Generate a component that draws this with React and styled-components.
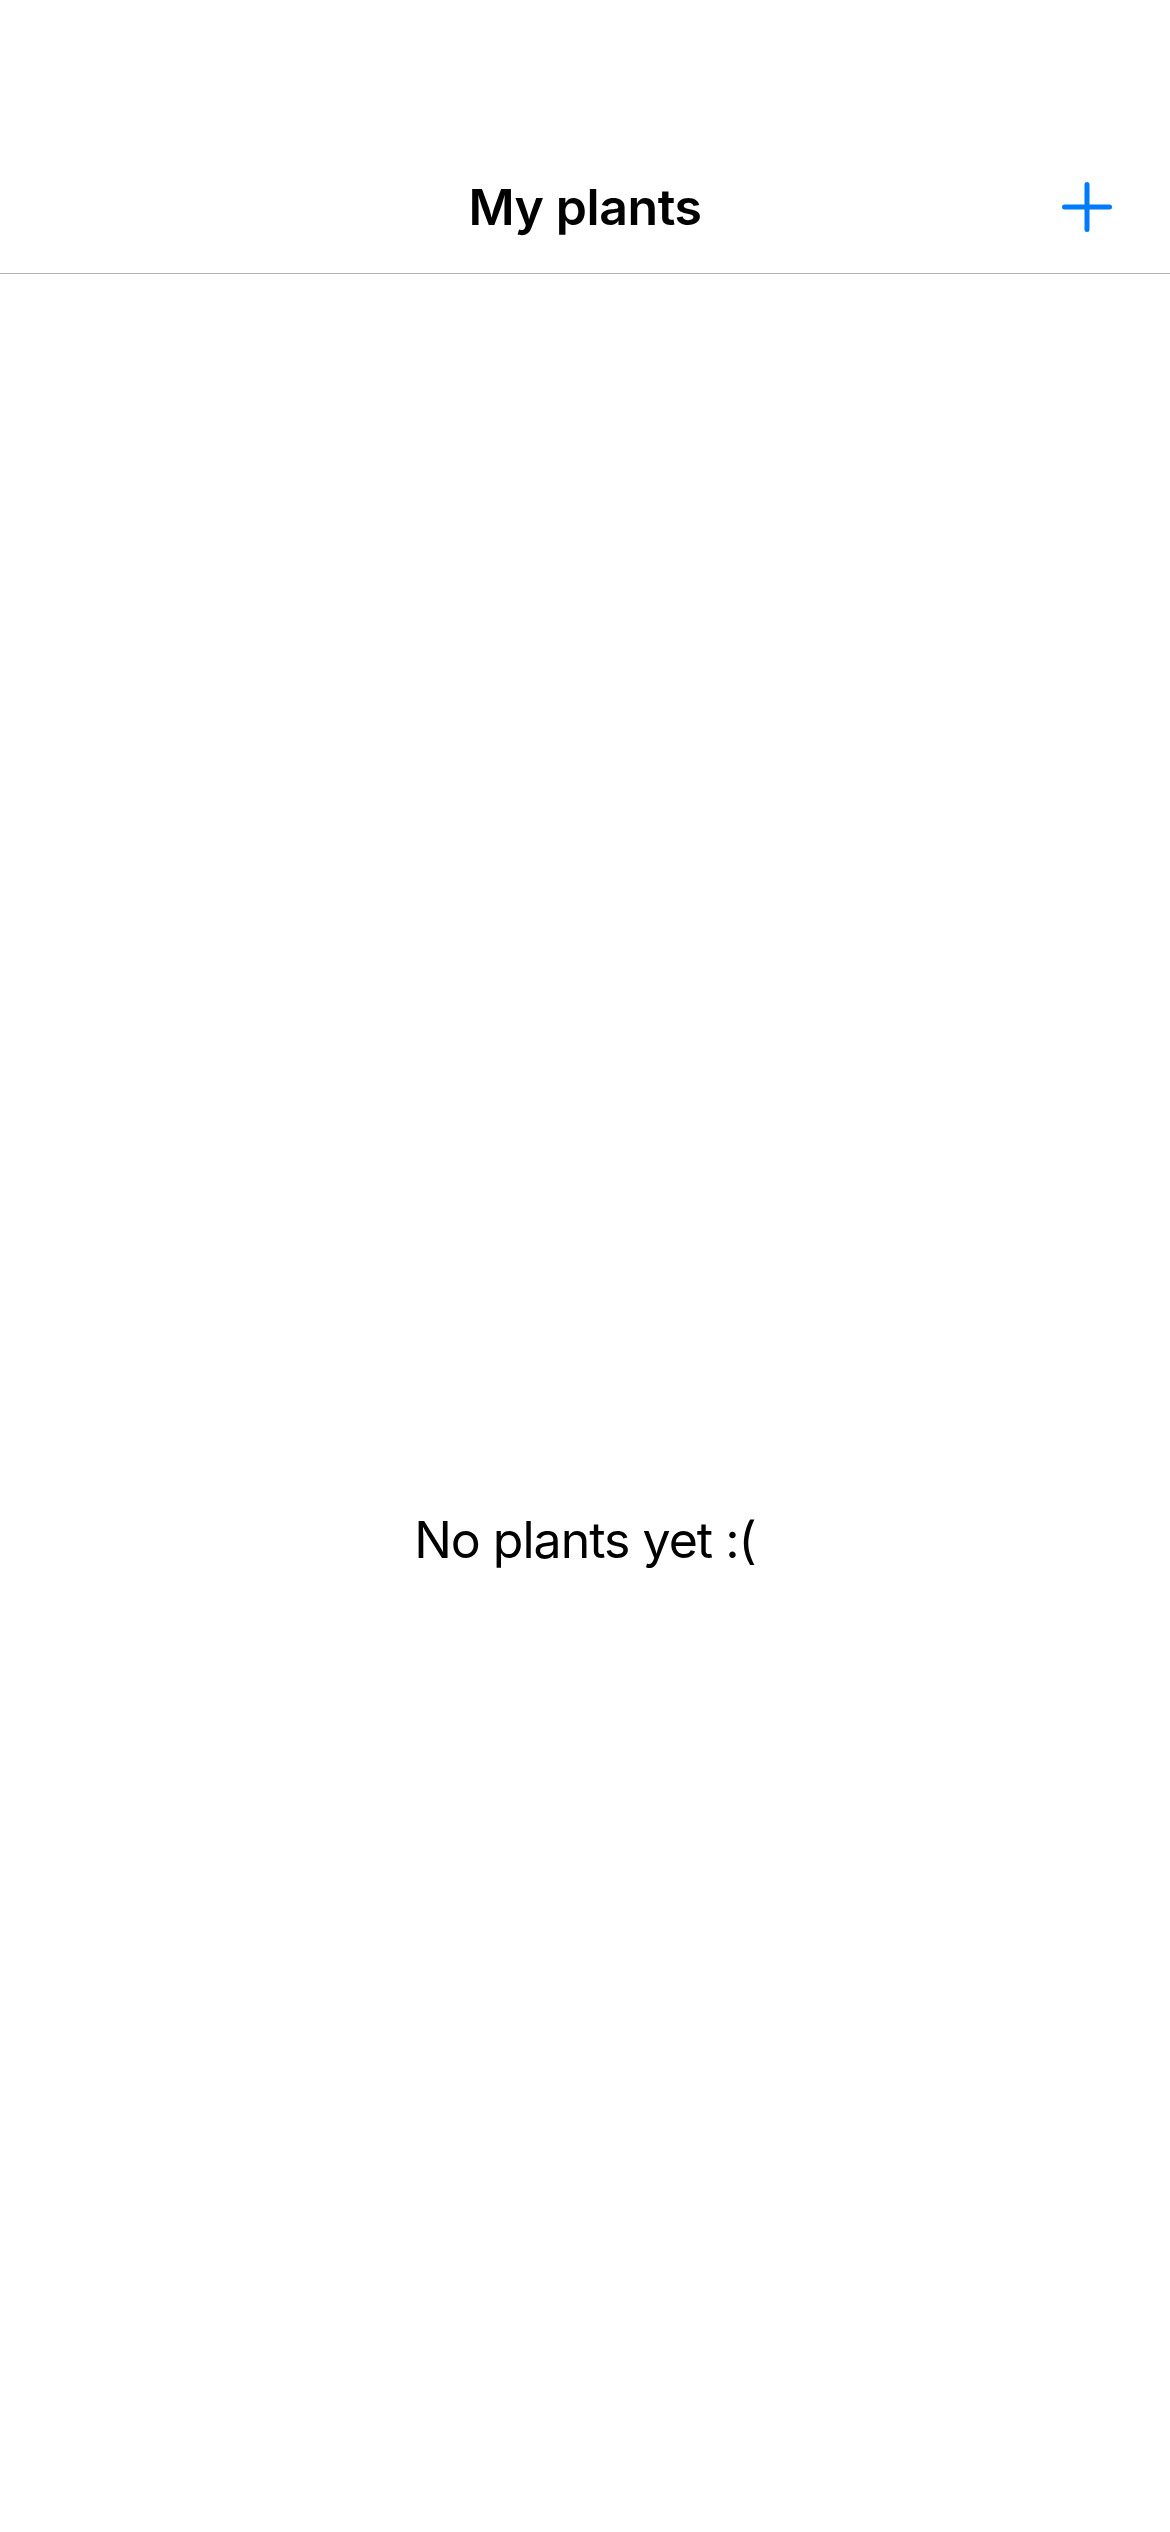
import React from "react";
import styled, { createGlobalStyle } from "styled-components";

const Global = createGlobalStyle`
  html, body { margin: 0; padding: 0; background: #ffffff; }
  body { font-family: Inter, "Noto Sans", sans-serif; -webkit-font-smoothing: antialiased; }
`;

const Screen = styled.div`
  width: 1170px;
  min-height: 2532px;
  display: flex;
  flex-direction: column;
  background: #ffffff;
`;

const NavBar = styled.header`
  margin-top: 140px;
  height: 133px;
  display: grid;
  grid-template-columns: 1fr auto 1fr;
  align-items: center;
  border-bottom: 1px solid #b2b2b2;
`;

const Title = styled.h1`
  grid-column: 2;
  margin: 0;
  font-size: 50px;
  font-weight: 600;
  color: #000;
  letter-spacing: -0.4px;
`;

const AddButton = styled.button`
  grid-column: 3;
  justify-self: end;
  margin-right: 55px;
  width: 56px;
  height: 56px;
  padding: 0;
  border: none;
  background: transparent;
  display: flex;
  align-items: center;
  justify-content: center;
  color: #007aff;
`;

const Body = styled.main`
  flex: 1;
  display: flex;
  justify-content: center;
  padding-top: 1235px;
`;

const EmptyText = styled.p`
  margin: 0;
  font-size: 50px;
  line-height: 62px;
  font-weight: 400;
  color: #000;
  letter-spacing: -1px;
`;

const PlusIcon = () => (
  <svg width="56" height="56" viewBox="0 0 56 56" fill="none">
    <path d="M28 5.5V50.5M5.5 28H50.5" stroke="currentColor" strokeWidth="5" strokeLinecap="round" />
  </svg>
);

export default function App() {
  return (
    <>
      <Global />
      <Screen>
        <NavBar>
          <Title>My plants</Title>
          <AddButton aria-label="Add plant">
            <PlusIcon />
          </AddButton>
        </NavBar>
        <Body>
          <EmptyText>No plants yet :(</EmptyText>
        </Body>
      </Screen>
    </>
  );
}
